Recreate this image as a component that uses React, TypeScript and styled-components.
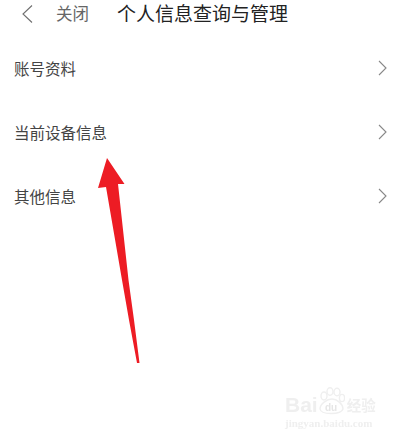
import React from 'react';
import styled, { createGlobalStyle } from 'styled-components';

const GlobalStyle = createGlobalStyle`
  html, body {
    margin: 0;
    padding: 0;
    background: #fff;
  }
`;

const Page = styled.div`
  position: relative;
  width: 402px;
  height: 441px;
  overflow: hidden;
  background: #fff;
  font-family: "Noto Sans CJK SC", "Liberation Sans", sans-serif;
`;
const Header = styled.div`
  display: flex;
  align-items: center;
  height: 25px;
  padding: 0 0 0 21px;
`;
const BackIcon = styled.svg`
  width: 13px;
  height: 22px;
  margin-right: 22px;
  flex: none;
`;
const CloseLabel = styled.span`
  font-size: 16.5px;
  color: #666;
  margin-right: 28px;
`;
const Title = styled.h1`
  margin: 0;
  font-size: 19px;
  font-weight: 400;
  color: #222;
`;
const List = styled.div`
  padding-top: 11px;
`;
const Row = styled.div`
  display: flex;
  align-items: center;
  justify-content: space-between;
  height: 64px;
  padding: 0 15px 0 14px;
`;
const RowLabel = styled.span`
  font-size: 15.5px;
  color: #444;
`;
const Chevron = styled.svg`
  width: 9px;
  height: 16px;
  flex: none;
`;
const ArrowMark = styled.svg`
  position: absolute;
  left: 90px;
  top: 150px;
  width: 60px;
  height: 220px;
`;
const Watermark = styled.div`
  position: absolute;
  left: 285px;
  top: 386px;
  width: 112px;
  color: #efefef;
  filter: blur(0.7px);
`;
const BrandRow = styled.div`
  display: flex;
  align-items: center;
  height: 30px;
`;
const BrandText = styled.span`
  font-family: "Liberation Sans", sans-serif;
  font-size: 21px;
  font-weight: 700;
  line-height: 1;
  padding-top: 6px;
`;
const Paw = styled.svg`
  width: 27px;
  height: 28px;
  flex: none;
`;
const PawLabel = styled.text`
  font-family: "Liberation Sans", sans-serif;
  font-size: 10px;
  font-weight: 700;
  fill: #e6e6e6;
`;
const BrandCjk = styled.span`
  font-size: 14.5px;
  font-weight: 700;
  line-height: 1;
  margin-left: 2px;
  padding-top: 8px;
`;
const Domain = styled.div`
  font-family: "Liberation Serif", serif;
  font-size: 11px;
  font-weight: 700;
  line-height: 14px;
  white-space: nowrap;
`;

const rows = ['账号资料', '当前设备信息', '其他信息'];

function App() {
  return (
    <Page>
      <GlobalStyle />
      <Header>
        <BackIcon viewBox="0 0 13 22">
          <path d="M11 3.500 L2 12 L11 20.500" fill="none" stroke="#6f6f6f" strokeWidth="1.1" />
        </BackIcon>
        <CloseLabel>关闭</CloseLabel>
        <Title>个人信息查询与管理</Title>
      </Header>
      <List>
        {rows.map((text) => (
          <Row key={text}>
            <RowLabel>{text}</RowLabel>
            <Chevron viewBox="0 0 9 16">
              <path d="M1 1 L8 8 L1 15" fill="none" stroke="#888" strokeWidth="1.1" />
            </Chevron>
          </Row>
        ))}
      </List>
      <ArrowMark viewBox="90 150 60 220">
        <path
          d="M107 158 L124.500 184 L118 184 L128.500 280 L134 320 L139.500 363 L137 363 L129 320 L122 280 L106 187 L98 188 Z"
          fill="#ed1c24"
        />
      </ArrowMark>
      <Watermark>
        <BrandRow>
          <BrandText>Bai</BrandText>
          <Paw viewBox="0 0 27 28">
            <g fill="none" stroke="currentColor" strokeWidth="1.4">
              <ellipse cx="6" cy="9" rx="3" ry="4" />
              <ellipse cx="12" cy="4.500" rx="3" ry="3.800" />
              <ellipse cx="19" cy="5" rx="3" ry="3.800" />
              <ellipse cx="24" cy="11" rx="2.600" ry="3.600" />
              <path d="M14 12 C9 12 2 17 2 22 C3 28 23 28 25 22 C25 17 19 12 14 12 Z" />
            </g>
            <PawLabel x="7" y="24">du</PawLabel>
          </Paw>
          <BrandCjk>经验</BrandCjk>
        </BrandRow>
        <Domain>jingyan.baidu.com</Domain>
      </Watermark>
    </Page>
  );
}

export default App;
